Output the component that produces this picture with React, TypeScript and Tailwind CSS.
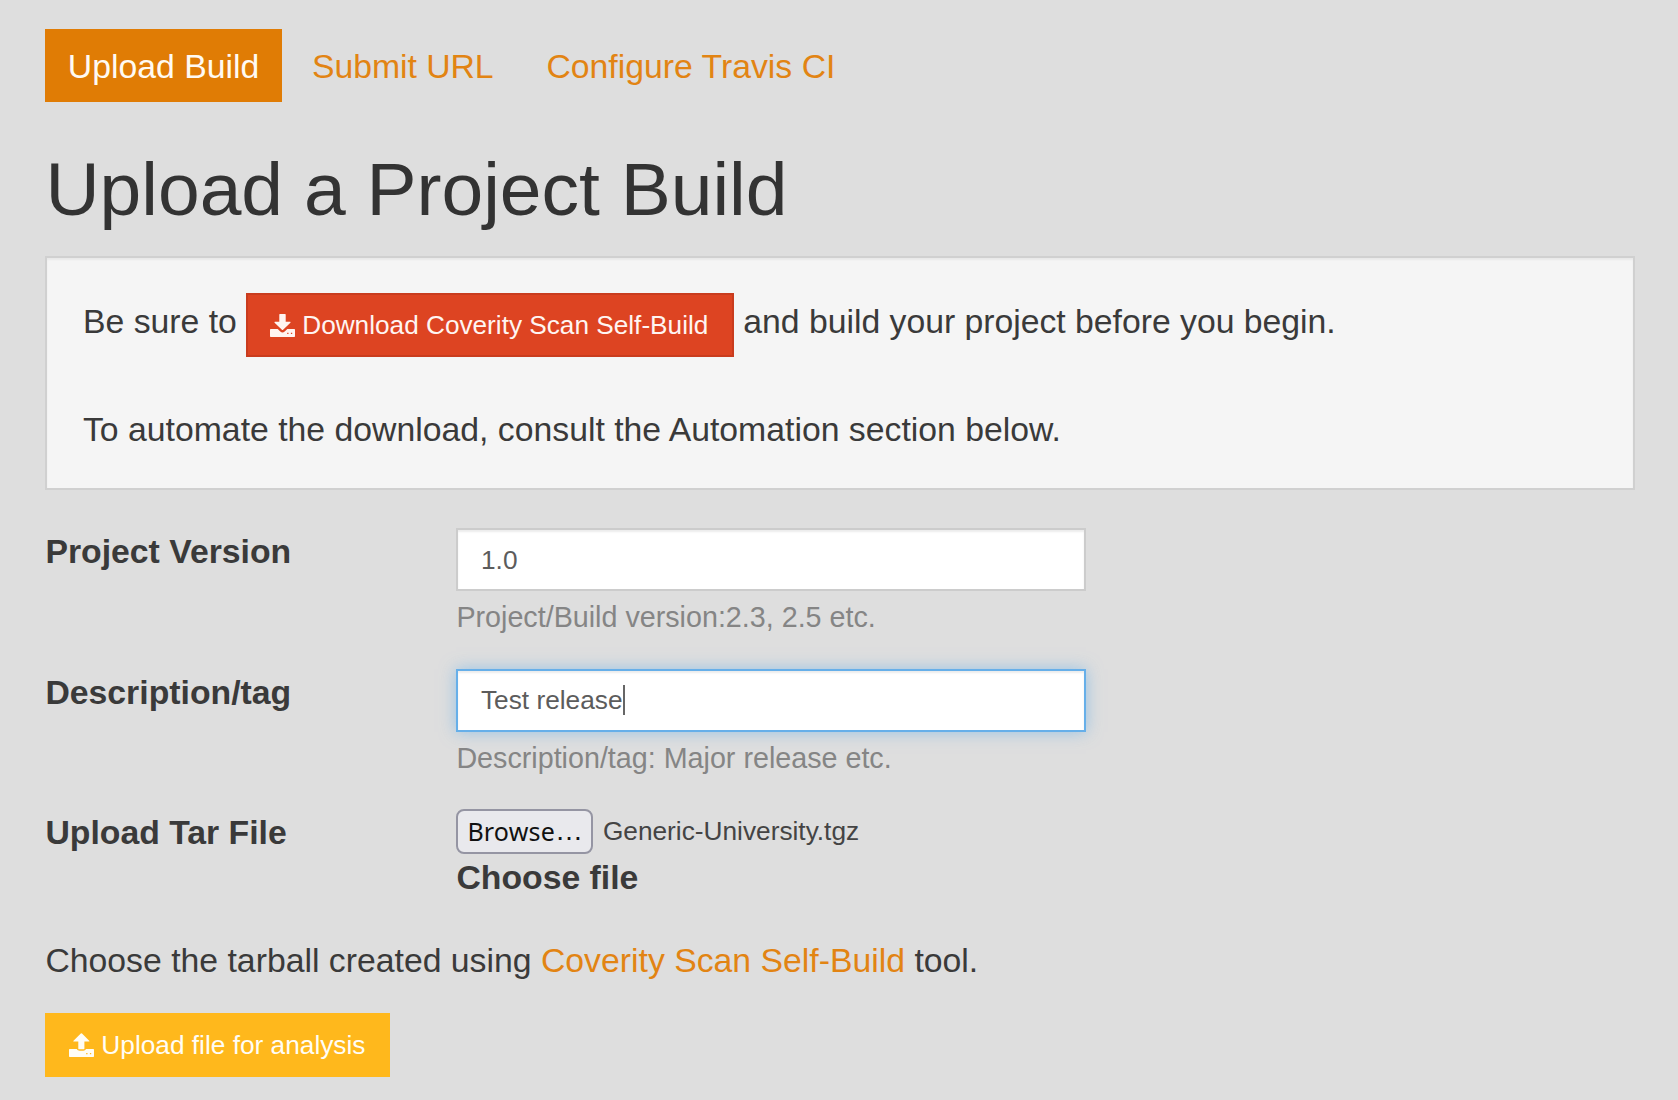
import React from "react";

const DownloadIcon = () => (
  <svg viewBox="0 0 25 23" className="-ml-px h-[23px] w-[25px] shrink-0 fill-current">
    <path d="M9.9 0h5.2q.6 0 .6.6V7.800h4.300q1 .1.4.900l-7.300 7.100q-.6.500-1.200 0L4.600 8.700q-.6-.8.400-.9h4.300V.6q0-.6.6-.6z" />
    <path
      fillRule="evenodd"
      d="M.7 15.100h7l2.600 2.500q2.200 1.700 4.400 0l2.600-2.500h7q.7 0 .7.700v6.500q0 .7-.7.700H.7q-.7 0-.7-.700v-6.500q0-.7.7-.7zM17.200 18.800h1.300v1.300h-1.300zM20.900 18.800h1.300v1.300h-1.300z"
    />
  </svg>
);

const UploadIcon = () => (
  <svg viewBox="0 0 25 24" className="-ml-px h-[24px] w-[25px] shrink-0 fill-current">
    <path d="M9.900 16.300h4.900q.6 0 .6-.6V8.600h4.400q1-.1.400-.9L13 .4q-.6-.5-1.200 0L4.500 7.700q-.6.800.400.900h4.400v7.100q0 .6.600.6z" />
    <path
      fillRule="evenodd"
      d="M.7 16h7q.9 1.700 2.900 1.700h3.600q2 0 2.900-1.700h7.200q.7 0 .7.700v6.600q0 .7-.7.700H.7q-.7 0-.7-.7v-6.600q0-.7.7-.7zM17.200 20h1.300v1.300h-1.300zM20.900 20h1.300v1.300h-1.300z"
    />
  </svg>
);

export default function App() {
  return (
    <div className="h-[1100px] w-[1678px] overflow-hidden bg-[#dedede] pt-[29px] pr-[43px] pl-[45.4px] font-['Liberation_Sans',sans-serif] text-[33.78px] leading-[48px] text-[#3a3a3a]">
      <nav className="flex h-[73px] items-center text-[#e28413]">
        <a className="flex h-[73px] w-[236.4px] items-center justify-center bg-[#e07c05] text-[#fffaf3]">Upload Build</a>
        <a className="ml-[30.3px] tracking-[-0.05px]">Submit URL</a>
        <a className="ml-[52.8px]">Configure Travis CI</a>
      </nav>
      <h1 className="mt-[46px] h-[83px] text-[75px] leading-[83px] whitespace-nowrap text-[#333]">Upload a Project Build</h1>
      <section className="mt-[25px] flex h-[234px] flex-col border-2 border-[#d0d0d0] bg-[#f5f5f5] px-[35.6px] pt-[35px] shadow-[inset_0_2px_2px_rgba(0,0,0,0.05)]">
        <p className="flex h-[64px] whitespace-nowrap">
          <span className="mt-[4px] -mr-px">Be sure to</span>
          <a className="mr-[9.500px] ml-[9.900px] flex h-[64px] w-[488px] items-center justify-center gap-[7px] border-2 border-[#c93c1e] bg-[#dd4422] text-[26.2px] text-[#fff5f2]">
            <DownloadIcon />
            <span>Download Coverity Scan Self-Build</span>
          </a>
          <span className="mt-[4px] tracking-[-0.02px]">and build your project before you begin.</span>
        </p>
        <p className="mt-[48px]">To automate the download, consult the Automation section below.</p>
      </section>
      <form>
        <div className="mt-[38px] flex h-[141px]">
          <label className="-mt-px w-[411px] font-bold">Project Version</label>
          <div>
            <div className="flex h-[63px] w-[630px] items-center border-2 border-[#ccc] bg-white px-[22.600px] text-[26.25px] text-[#5c5c5c] shadow-[inset_0_2px_2px_rgba(0,0,0,0.075)]">1.0</div>
            <p className="mt-[6px] text-[28.7px] leading-[40px] text-[#858585]">Project/Build version:2.3, 2.5 etc.</p>
          </div>
        </div>
        <div className="flex h-[140px]">
          <label className="-mt-px w-[411px] font-bold">Description/tag</label>
          <div>
            <div className="flex h-[63px] w-[630px] items-center border-2 border-[#66afe9] bg-white px-[22.600px] pb-px text-[26.25px] text-[#5c5c5c] shadow-[inset_0_2px_2px_rgba(0,0,0,0.075),0_0_15px_rgba(102,175,233,0.6)]">
              Test release
              <i className="h-[30px] w-[2px] bg-[#666]" />
            </div>
            <p className="mt-[6px] text-[28.7px] leading-[40px] text-[#858585]">Description/tag: Major release etc.</p>
          </div>
        </div>
        <div className="flex h-[127px]">
          <label className="-mt-px w-[411px] font-bold">Upload Tar File</label>
          <div>
            <div className="flex h-[45px] items-center text-[26.25px]">
              <span className="flex h-[45px] w-[137px] items-center rounded-[8px] border-2 border-[#9595a3] bg-[#e9e9ed] pb-px pl-[9px] font-['Noto_Sans',sans-serif] text-[25px] text-[#111]">
                <span className="tracking-[0.2px]">Browse</span>
                <span className="font-['Liberation_Sans',sans-serif] text-[28px]">…</span>
              </span>
              <span className="ml-[9.500px] pb-px text-[#444]">Generic-University.tgz</span>
            </div>
            <label className="-mt-px block font-bold">Choose file</label>
          </div>
        </div>
        <p className="whitespace-nowrap">
          Choose the tarball created using <a className="text-[#e28413]">Coverity Scan Self-Build</a> tool.
        </p>
        <button className="mt-[29px] flex h-[64px] w-[345px] items-center justify-center gap-[7px] bg-[#ffb81c] text-[26.25px] text-[#fffdf6]">
          <UploadIcon />
          <span>Upload file for analysis</span>
        </button>
      </form>
    </div>
  );
}
